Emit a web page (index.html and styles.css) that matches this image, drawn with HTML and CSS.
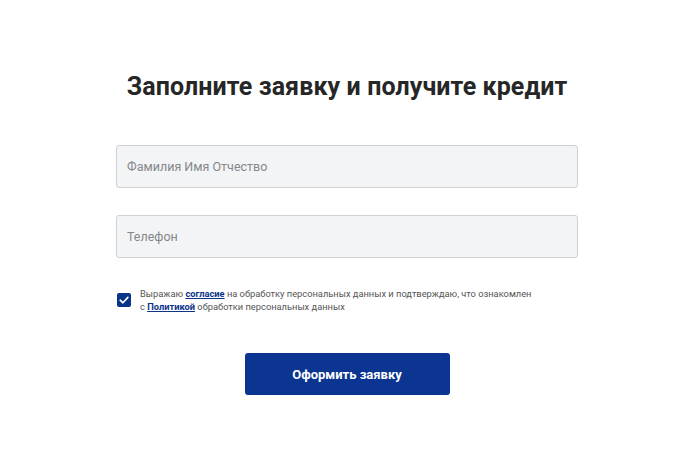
FILE: index.html
```html
<!DOCTYPE html>
<html lang="ru">
<head>
<meta charset="utf-8">
<link rel="stylesheet" href="styles.css">
</head>
<body>
<main class="form">
  <h1 class="title">Заполните заявку и получите кредит</h1>
  <div class="field">Фамилия Имя Отчество</div>
  <div class="field">Телефон</div>
  <div class="consent">
    <span class="check">
      <svg width="14" height="14" viewBox="0 0 14 14"><rect width="14" height="14" rx="2" fill="#0b3388"/><path d="M3.2 7.2 L5.9 9.8 L10.9 4.4" fill="none" stroke="#fff" stroke-width="1.6" stroke-linecap="round" stroke-linejoin="round"/></svg>
    </span>
    <p class="consent-text">Выражаю <a class="link">согласие</a> на обработку персональных данных и подтверждаю, что ознакомлен<br>с <a class="link">Политикой</a> обработки персональных данных</p>
  </div>
  <div class="actions"><button class="submit">Оформить заявку</button></div>
</main>
</body>
</html>
```
FILE: styles.css
```css
html, body { margin: 0; padding: 0; background: #fff; }
body { font-family: Roboto, "Liberation Sans", Arial, sans-serif; }
.form {
  width: 462px;
  margin-left: 116px;
  padding-top: 70px;
  display: flex;
  flex-direction: column;
}
.title {
  margin: 0 0 41px;
  font-size: 25px;
  line-height: 34px;
  font-weight: 700;
  color: #262626;
  text-align: center;
  letter-spacing: 0.1px;
}
.field {
  box-sizing: border-box;
  height: 43px;
  background: #f3f4f6;
  border: 1px solid #cfd1d4;
  border-radius: 3px;
  padding: 0 10px;
  display: flex;
  align-items: center;
  font-size: 12.5px;
  color: #85878b;
  margin-bottom: 27px;
}
.consent {
  display: flex;
  align-items: flex-start;
  margin-top: 2px;
  padding-left: 1px;
}
.check { width: 14px; height: 14px; margin-top: 6px; margin-right: 9px; flex: none; }
.check svg { display: block; }
.consent-text {
  margin: 0;
  font-size: 9.3px;
  line-height: 13px;
  color: #555;
}
.link { color: #0b3388; font-weight: 700; text-decoration: underline; }
.actions { display: flex; justify-content: center; margin-top: 40px; }
.submit {
  width: 205px;
  height: 42px;
  border: none;
  border-radius: 3px;
  background: #0b3590;
  color: #fff;
  font-family: Roboto, "Liberation Sans", Arial, sans-serif;
  font-size: 13px;
  font-weight: 700;
}
```
